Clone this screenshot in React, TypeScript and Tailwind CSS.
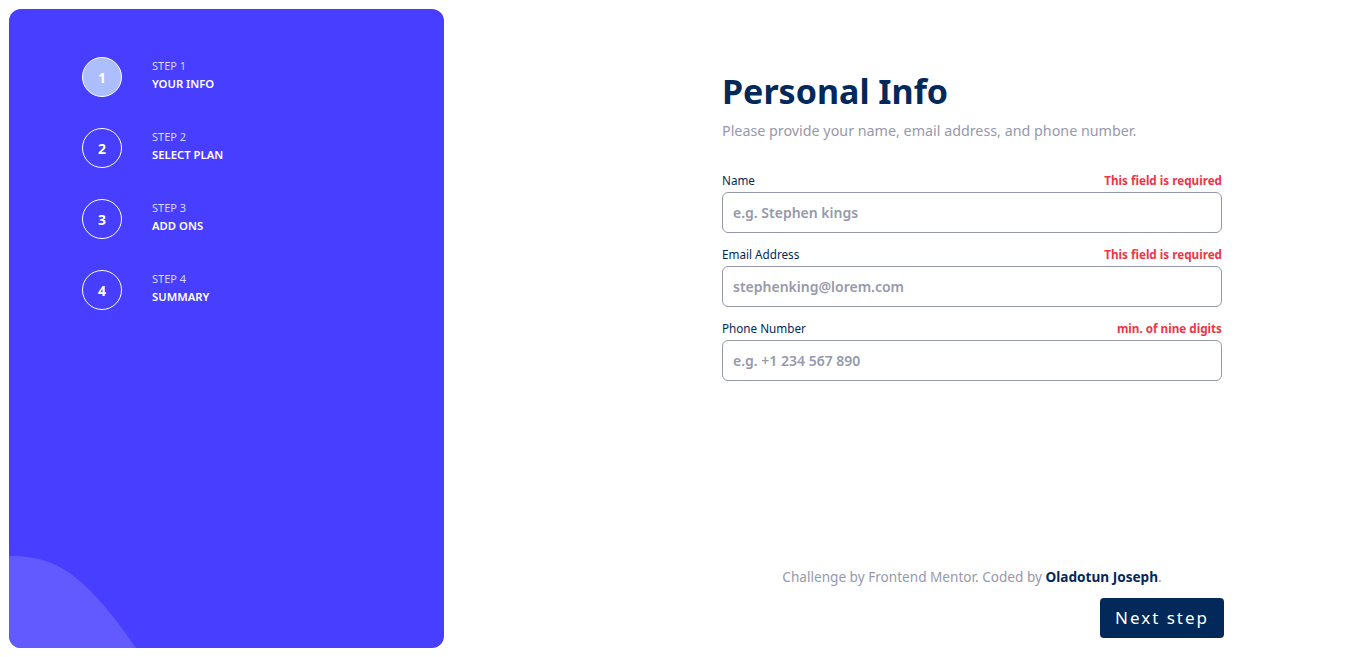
import React from "react";

const steps = [
  { n: 1, title: "YOUR INFO" },
  { n: 2, title: "SELECT PLAN" },
  { n: 3, title: "ADD ONS" },
  { n: 4, title: "SUMMARY" },
];

const fields = [
  { label: "Name", error: "This field is required", ph: "e.g. Stephen kings" },
  { label: "Email Address", error: "This field is required", ph: "stephenking@lorem.com" },
  { label: "Phone Number", error: "min. of nine digits", ph: "e.g. +1 234 567 890" },
];

export default function App() {
  return (
    <div
      className="flex h-[657px] w-[1366px] bg-white p-[9px]"
      style={{ fontFamily: '"Noto Sans", "Open Sans", sans-serif' }}
    >
      <aside className="relative flex h-[639px] w-[435px] shrink-0 flex-col gap-[31px] overflow-hidden rounded-[12px] bg-[#483EFF] pl-[73px] pt-[48px]">
        {steps.map((s) => (
          <div key={s.n} className="flex items-center">
            <div
              className={
                s.n === 1
                  ? "flex h-[40px] w-[40px] items-center justify-center rounded-full border border-white bg-[#ADBEFF] text-[14px] font-bold text-white"
                  : "flex h-[40px] w-[40px] items-center justify-center rounded-full border border-white text-[14px] font-bold text-white"
              }
            >
              {s.n}
            </div>
            <div className="ml-[30px] mb-[5px] flex flex-col gap-[2px]">
              <span className="text-[11px] leading-[16px] text-[#d6d9ff]">STEP {s.n}</span>
              <span className="text-[11.3px] font-semibold leading-[16px] text-white">{s.title}</span>
            </div>
          </div>
        ))}
        <svg
          className="absolute bottom-0 left-0"
          width="127"
          height="92"
          viewBox="0 0 127 92"
        >
          <path d="M0 0 C 18 0, 40 2, 62 18 C 84 34, 105 60, 127 92 L0 92 Z" fill="#6259FF" />
        </svg>
      </aside>

      <main className="flex flex-1 flex-col pl-[278px] pr-[135px]">
        <h1 className="mt-[60px] text-[34px] font-bold leading-[44px] text-[#02295A]">
          Personal Info
        </h1>
        <p className="mt-[7px] text-[14.3px] leading-[22px] text-[#9699AB]">
          Please provide your name, email address, and phone number.
        </p>
        <div className="mt-[30px] flex w-[500px] flex-col gap-[13px]">
          {fields.map((f) => (
            <div key={f.label} className="flex flex-col">
              <div className="flex h-[18px] items-center justify-between">
                <span className="text-[11.7px] text-[#02295A]">{f.label}</span>
                <span className="text-[11.7px] font-bold text-[#ED3548]">{f.error}</span>
              </div>
              <div className="mt-[2px] flex h-[41px] items-center rounded-[6px] border border-[#9699AB] px-[10px]">
                <span className="text-[14px] font-semibold text-[#9699AB]">{f.ph}</span>
              </div>
            </div>
          ))}
        </div>
        <div className="flex-1" />
        <p className="w-[500px] text-center text-[13.6px] leading-[18px] text-[#9699AB]">
          Challenge by Frontend Mentor. Coded by{" "}
          <span className="font-bold text-[#02295A]">Oladotun Joseph</span>.
        </p>
        <div className="mt-[12px] flex w-[502px] justify-end pb-[10px]">
          <button className="h-[40px] w-[124px] rounded-[4px] bg-[#02295A] text-[17px] tracking-[2px] text-white">
            Next step
          </button>
        </div>
      </main>
    </div>
  );
}
